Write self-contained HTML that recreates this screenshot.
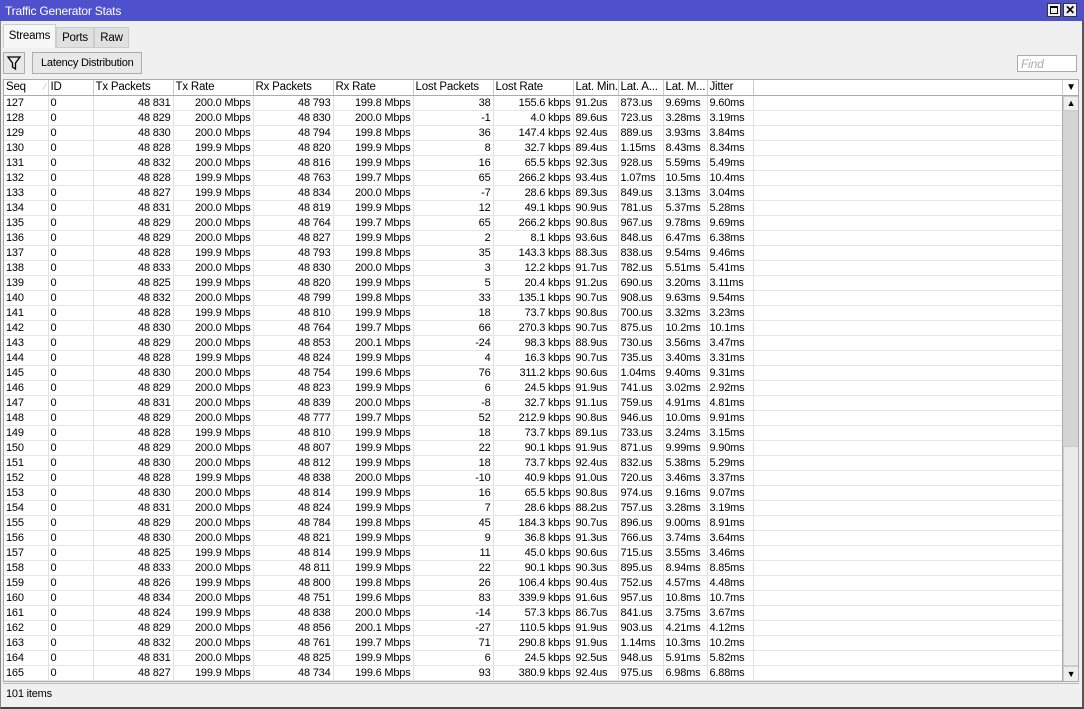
<!DOCTYPE html>
<html><head><meta charset="utf-8"><style>
*{box-sizing:border-box;margin:0;padding:0}
body{width:1084px;height:709px;background:#f0f0f0;font-family:"Liberation Sans",sans-serif;font-size:11px;color:#000;position:relative;overflow:hidden;letter-spacing:-0.2px}
.title{position:absolute;left:0;top:0;width:1084px;height:21px;background:#4e50cc;color:#fff;font-size:12px;padding:4px 0 0 5px}
.wbtn{position:absolute;top:3px;width:14px;height:14px;background:#eee;border:1px solid #333}
.frame{position:absolute;left:0;top:21px;width:1084px;height:688px;border-left:1px solid #888;border-right:2px solid #555;border-bottom:2px solid #444}
.tab{position:absolute;top:27px;height:21px;padding-top:4px;text-align:center;border:1px solid #ccc;background:#e0e0e0;font-size:11.5px}
.btn{position:absolute;border:1px solid #adadad;background:#e8e8e8}
.find{position:absolute;left:1017px;top:55px;width:60px;height:17px;border:1px solid #aaa;background:#fff;color:#aaa;font-style:italic;padding:1px 3px;font-size:12px}
.grid{position:absolute;left:3px;top:79px;width:1076px;height:603px;background:#fff;border:1px solid #aaa;overflow:hidden}
table{border-collapse:collapse;table-layout:fixed;width:1059px}
td,th{height:15px;border-right:1px solid #e0e0e0;border-bottom:1px solid #e6e6e6;padding:0 2px;white-space:nowrap;overflow:hidden;font-weight:normal;line-height:14px}
th{height:15px;text-align:left;background:#fff;border-right:1px solid #ccc;border-bottom:1px solid #aaa;font-size:11.5px}
td.r{text-align:right}
.sb{position:absolute;left:1058px;top:16px;width:17px;height:586px;background:#d4d4d4;border-left:1px solid #aaa}
.status{position:absolute;left:3px;top:683px;width:1076px;height:21px;border-top:1px solid #bbb;padding:4px 3px}
</style></head><body>
<div class="title">Traffic Generator Stats</div>
<div class="wbtn" style="left:1047px"><div style="position:absolute;left:2px;top:2px;width:8px;height:8px;border:1px solid #000;border-top-width:2px"></div></div>
<div class="wbtn" style="left:1063px;font-weight:bold;font-size:12px;line-height:12px;text-align:center">✕</div>
<div class="frame"></div>
<div class="tab" style="left:3px;top:24px;width:53px;height:24px;background:#f7f7f7;border-bottom:none;padding-top:5px">Streams</div>
<div class="tab" style="left:56px;width:38px">Ports</div>
<div class="tab" style="left:94px;width:35px">Raw</div>
<div class="btn" style="left:3px;top:52px;width:22px;height:22px"><svg width="20" height="20" viewBox="0 0 20 20"><path d="M4 4h12l-4.5 6v6l-3-2v-4z" fill="none" stroke="#000" stroke-width="1.3"/></svg></div>
<div class="btn" style="left:32px;top:52px;width:110px;height:22px;padding:4px 0 0 8px">Latency Distribution</div>
<div class="find">Find</div>
<div class="grid">
<table>
<colgroup><col style="width:44px"><col style="width:45px"><col style="width:80px"><col style="width:80px"><col style="width:80px"><col style="width:80px"><col style="width:80px"><col style="width:80px"><col style="width:45px"><col style="width:45px"><col style="width:44px"><col style="width:46px"><col></colgroup>
<tr><th>Seq <span style="color:#aaa;font-size:8px;float:right">∕</span></th><th>ID</th><th>Tx Packets</th><th>Tx Rate</th><th>Rx Packets</th><th>Rx Rate</th><th>Lost Packets</th><th>Lost Rate</th><th>Lat. Min.</th><th>Lat. A...</th><th>Lat. M...</th><th>Jitter</th><th></th></tr>
<tr><td>127</td><td>0</td><td class="r">48 831</td><td class="r">200.0 Mbps</td><td class="r">48 793</td><td class="r">199.8 Mbps</td><td class="r">38</td><td class="r">155.6 kbps</td><td>91.2us</td><td>873.us</td><td>9.69ms</td><td>9.60ms</td><td></td></tr>
<tr><td>128</td><td>0</td><td class="r">48 829</td><td class="r">200.0 Mbps</td><td class="r">48 830</td><td class="r">200.0 Mbps</td><td class="r">-1</td><td class="r">4.0 kbps</td><td>89.6us</td><td>723.us</td><td>3.28ms</td><td>3.19ms</td><td></td></tr>
<tr><td>129</td><td>0</td><td class="r">48 830</td><td class="r">200.0 Mbps</td><td class="r">48 794</td><td class="r">199.8 Mbps</td><td class="r">36</td><td class="r">147.4 kbps</td><td>92.4us</td><td>889.us</td><td>3.93ms</td><td>3.84ms</td><td></td></tr>
<tr><td>130</td><td>0</td><td class="r">48 828</td><td class="r">199.9 Mbps</td><td class="r">48 820</td><td class="r">199.9 Mbps</td><td class="r">8</td><td class="r">32.7 kbps</td><td>89.4us</td><td>1.15ms</td><td>8.43ms</td><td>8.34ms</td><td></td></tr>
<tr><td>131</td><td>0</td><td class="r">48 832</td><td class="r">200.0 Mbps</td><td class="r">48 816</td><td class="r">199.9 Mbps</td><td class="r">16</td><td class="r">65.5 kbps</td><td>92.3us</td><td>928.us</td><td>5.59ms</td><td>5.49ms</td><td></td></tr>
<tr><td>132</td><td>0</td><td class="r">48 828</td><td class="r">199.9 Mbps</td><td class="r">48 763</td><td class="r">199.7 Mbps</td><td class="r">65</td><td class="r">266.2 kbps</td><td>93.4us</td><td>1.07ms</td><td>10.5ms</td><td>10.4ms</td><td></td></tr>
<tr><td>133</td><td>0</td><td class="r">48 827</td><td class="r">199.9 Mbps</td><td class="r">48 834</td><td class="r">200.0 Mbps</td><td class="r">-7</td><td class="r">28.6 kbps</td><td>89.3us</td><td>849.us</td><td>3.13ms</td><td>3.04ms</td><td></td></tr>
<tr><td>134</td><td>0</td><td class="r">48 831</td><td class="r">200.0 Mbps</td><td class="r">48 819</td><td class="r">199.9 Mbps</td><td class="r">12</td><td class="r">49.1 kbps</td><td>90.9us</td><td>781.us</td><td>5.37ms</td><td>5.28ms</td><td></td></tr>
<tr><td>135</td><td>0</td><td class="r">48 829</td><td class="r">200.0 Mbps</td><td class="r">48 764</td><td class="r">199.7 Mbps</td><td class="r">65</td><td class="r">266.2 kbps</td><td>90.8us</td><td>967.us</td><td>9.78ms</td><td>9.69ms</td><td></td></tr>
<tr><td>136</td><td>0</td><td class="r">48 829</td><td class="r">200.0 Mbps</td><td class="r">48 827</td><td class="r">199.9 Mbps</td><td class="r">2</td><td class="r">8.1 kbps</td><td>93.6us</td><td>848.us</td><td>6.47ms</td><td>6.38ms</td><td></td></tr>
<tr><td>137</td><td>0</td><td class="r">48 828</td><td class="r">199.9 Mbps</td><td class="r">48 793</td><td class="r">199.8 Mbps</td><td class="r">35</td><td class="r">143.3 kbps</td><td>88.3us</td><td>838.us</td><td>9.54ms</td><td>9.46ms</td><td></td></tr>
<tr><td>138</td><td>0</td><td class="r">48 833</td><td class="r">200.0 Mbps</td><td class="r">48 830</td><td class="r">200.0 Mbps</td><td class="r">3</td><td class="r">12.2 kbps</td><td>91.7us</td><td>782.us</td><td>5.51ms</td><td>5.41ms</td><td></td></tr>
<tr><td>139</td><td>0</td><td class="r">48 825</td><td class="r">199.9 Mbps</td><td class="r">48 820</td><td class="r">199.9 Mbps</td><td class="r">5</td><td class="r">20.4 kbps</td><td>91.2us</td><td>690.us</td><td>3.20ms</td><td>3.11ms</td><td></td></tr>
<tr><td>140</td><td>0</td><td class="r">48 832</td><td class="r">200.0 Mbps</td><td class="r">48 799</td><td class="r">199.8 Mbps</td><td class="r">33</td><td class="r">135.1 kbps</td><td>90.7us</td><td>908.us</td><td>9.63ms</td><td>9.54ms</td><td></td></tr>
<tr><td>141</td><td>0</td><td class="r">48 828</td><td class="r">199.9 Mbps</td><td class="r">48 810</td><td class="r">199.9 Mbps</td><td class="r">18</td><td class="r">73.7 kbps</td><td>90.8us</td><td>700.us</td><td>3.32ms</td><td>3.23ms</td><td></td></tr>
<tr><td>142</td><td>0</td><td class="r">48 830</td><td class="r">200.0 Mbps</td><td class="r">48 764</td><td class="r">199.7 Mbps</td><td class="r">66</td><td class="r">270.3 kbps</td><td>90.7us</td><td>875.us</td><td>10.2ms</td><td>10.1ms</td><td></td></tr>
<tr><td>143</td><td>0</td><td class="r">48 829</td><td class="r">200.0 Mbps</td><td class="r">48 853</td><td class="r">200.1 Mbps</td><td class="r">-24</td><td class="r">98.3 kbps</td><td>88.9us</td><td>730.us</td><td>3.56ms</td><td>3.47ms</td><td></td></tr>
<tr><td>144</td><td>0</td><td class="r">48 828</td><td class="r">199.9 Mbps</td><td class="r">48 824</td><td class="r">199.9 Mbps</td><td class="r">4</td><td class="r">16.3 kbps</td><td>90.7us</td><td>735.us</td><td>3.40ms</td><td>3.31ms</td><td></td></tr>
<tr><td>145</td><td>0</td><td class="r">48 830</td><td class="r">200.0 Mbps</td><td class="r">48 754</td><td class="r">199.6 Mbps</td><td class="r">76</td><td class="r">311.2 kbps</td><td>90.6us</td><td>1.04ms</td><td>9.40ms</td><td>9.31ms</td><td></td></tr>
<tr><td>146</td><td>0</td><td class="r">48 829</td><td class="r">200.0 Mbps</td><td class="r">48 823</td><td class="r">199.9 Mbps</td><td class="r">6</td><td class="r">24.5 kbps</td><td>91.9us</td><td>741.us</td><td>3.02ms</td><td>2.92ms</td><td></td></tr>
<tr><td>147</td><td>0</td><td class="r">48 831</td><td class="r">200.0 Mbps</td><td class="r">48 839</td><td class="r">200.0 Mbps</td><td class="r">-8</td><td class="r">32.7 kbps</td><td>91.1us</td><td>759.us</td><td>4.91ms</td><td>4.81ms</td><td></td></tr>
<tr><td>148</td><td>0</td><td class="r">48 829</td><td class="r">200.0 Mbps</td><td class="r">48 777</td><td class="r">199.7 Mbps</td><td class="r">52</td><td class="r">212.9 kbps</td><td>90.8us</td><td>946.us</td><td>10.0ms</td><td>9.91ms</td><td></td></tr>
<tr><td>149</td><td>0</td><td class="r">48 828</td><td class="r">199.9 Mbps</td><td class="r">48 810</td><td class="r">199.9 Mbps</td><td class="r">18</td><td class="r">73.7 kbps</td><td>89.1us</td><td>733.us</td><td>3.24ms</td><td>3.15ms</td><td></td></tr>
<tr><td>150</td><td>0</td><td class="r">48 829</td><td class="r">200.0 Mbps</td><td class="r">48 807</td><td class="r">199.9 Mbps</td><td class="r">22</td><td class="r">90.1 kbps</td><td>91.9us</td><td>871.us</td><td>9.99ms</td><td>9.90ms</td><td></td></tr>
<tr><td>151</td><td>0</td><td class="r">48 830</td><td class="r">200.0 Mbps</td><td class="r">48 812</td><td class="r">199.9 Mbps</td><td class="r">18</td><td class="r">73.7 kbps</td><td>92.4us</td><td>832.us</td><td>5.38ms</td><td>5.29ms</td><td></td></tr>
<tr><td>152</td><td>0</td><td class="r">48 828</td><td class="r">199.9 Mbps</td><td class="r">48 838</td><td class="r">200.0 Mbps</td><td class="r">-10</td><td class="r">40.9 kbps</td><td>91.0us</td><td>720.us</td><td>3.46ms</td><td>3.37ms</td><td></td></tr>
<tr><td>153</td><td>0</td><td class="r">48 830</td><td class="r">200.0 Mbps</td><td class="r">48 814</td><td class="r">199.9 Mbps</td><td class="r">16</td><td class="r">65.5 kbps</td><td>90.8us</td><td>974.us</td><td>9.16ms</td><td>9.07ms</td><td></td></tr>
<tr><td>154</td><td>0</td><td class="r">48 831</td><td class="r">200.0 Mbps</td><td class="r">48 824</td><td class="r">199.9 Mbps</td><td class="r">7</td><td class="r">28.6 kbps</td><td>88.2us</td><td>757.us</td><td>3.28ms</td><td>3.19ms</td><td></td></tr>
<tr><td>155</td><td>0</td><td class="r">48 829</td><td class="r">200.0 Mbps</td><td class="r">48 784</td><td class="r">199.8 Mbps</td><td class="r">45</td><td class="r">184.3 kbps</td><td>90.7us</td><td>896.us</td><td>9.00ms</td><td>8.91ms</td><td></td></tr>
<tr><td>156</td><td>0</td><td class="r">48 830</td><td class="r">200.0 Mbps</td><td class="r">48 821</td><td class="r">199.9 Mbps</td><td class="r">9</td><td class="r">36.8 kbps</td><td>91.3us</td><td>766.us</td><td>3.74ms</td><td>3.64ms</td><td></td></tr>
<tr><td>157</td><td>0</td><td class="r">48 825</td><td class="r">199.9 Mbps</td><td class="r">48 814</td><td class="r">199.9 Mbps</td><td class="r">11</td><td class="r">45.0 kbps</td><td>90.6us</td><td>715.us</td><td>3.55ms</td><td>3.46ms</td><td></td></tr>
<tr><td>158</td><td>0</td><td class="r">48 833</td><td class="r">200.0 Mbps</td><td class="r">48 811</td><td class="r">199.9 Mbps</td><td class="r">22</td><td class="r">90.1 kbps</td><td>90.3us</td><td>895.us</td><td>8.94ms</td><td>8.85ms</td><td></td></tr>
<tr><td>159</td><td>0</td><td class="r">48 826</td><td class="r">199.9 Mbps</td><td class="r">48 800</td><td class="r">199.8 Mbps</td><td class="r">26</td><td class="r">106.4 kbps</td><td>90.4us</td><td>752.us</td><td>4.57ms</td><td>4.48ms</td><td></td></tr>
<tr><td>160</td><td>0</td><td class="r">48 834</td><td class="r">200.0 Mbps</td><td class="r">48 751</td><td class="r">199.6 Mbps</td><td class="r">83</td><td class="r">339.9 kbps</td><td>91.6us</td><td>957.us</td><td>10.8ms</td><td>10.7ms</td><td></td></tr>
<tr><td>161</td><td>0</td><td class="r">48 824</td><td class="r">199.9 Mbps</td><td class="r">48 838</td><td class="r">200.0 Mbps</td><td class="r">-14</td><td class="r">57.3 kbps</td><td>86.7us</td><td>841.us</td><td>3.75ms</td><td>3.67ms</td><td></td></tr>
<tr><td>162</td><td>0</td><td class="r">48 829</td><td class="r">200.0 Mbps</td><td class="r">48 856</td><td class="r">200.1 Mbps</td><td class="r">-27</td><td class="r">110.5 kbps</td><td>91.9us</td><td>903.us</td><td>4.21ms</td><td>4.12ms</td><td></td></tr>
<tr><td>163</td><td>0</td><td class="r">48 832</td><td class="r">200.0 Mbps</td><td class="r">48 761</td><td class="r">199.7 Mbps</td><td class="r">71</td><td class="r">290.8 kbps</td><td>91.9us</td><td>1.14ms</td><td>10.3ms</td><td>10.2ms</td><td></td></tr>
<tr><td>164</td><td>0</td><td class="r">48 831</td><td class="r">200.0 Mbps</td><td class="r">48 825</td><td class="r">199.9 Mbps</td><td class="r">6</td><td class="r">24.5 kbps</td><td>92.5us</td><td>948.us</td><td>5.91ms</td><td>5.82ms</td><td></td></tr>
<tr><td>165</td><td>0</td><td class="r">48 827</td><td class="r">199.9 Mbps</td><td class="r">48 734</td><td class="r">199.6 Mbps</td><td class="r">93</td><td class="r">380.9 kbps</td><td>92.4us</td><td>975.us</td><td>6.98ms</td><td>6.88ms</td><td></td></tr>
</table>
<div style="position:absolute;left:1058px;top:0;width:17px;height:16px;background:#fff;border-left:1px solid #ccc;border-bottom:1px solid #aaa;font-size:10px;text-align:center;line-height:15px">▼</div>
<div class="sb">
<div style="position:absolute;left:0;top:0;width:16px;height:15px;background:#eee;border:1px solid #ccc;font-size:9px;text-align:center;line-height:13px">▲</div>
<div style="position:absolute;left:0;top:350px;width:16px;height:220px;background:#eaeaea;border:1px solid #ccc"></div>
<div style="position:absolute;left:0;top:570px;width:16px;height:16px;background:#eee;border:1px solid #ccc;font-size:9px;text-align:center;line-height:14px">▼</div>
</div>
</div>
<div class="status">101 items</div>
</body></html>
